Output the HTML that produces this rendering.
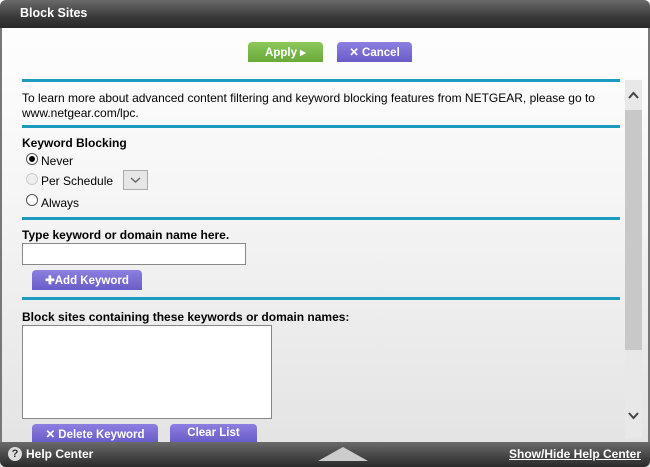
<!DOCTYPE html>
<html><head><style>
*{margin:0;padding:0;box-sizing:border-box}
body{width:650px;height:467px;overflow:hidden;font-family:"Liberation Sans",Arial,sans-serif;font-size:12px;color:#000;position:relative;background:linear-gradient(#fff 0%,#f6f6f6 40%,#e2e2e2 100%)}
.a{position:absolute}
.hdr{left:0;top:0;width:650px;height:28px;background:linear-gradient(#6a6a6a,#3a3a3a 60%,#2a2a2a);border-radius:6px 6px 0 0;color:#fff;font-weight:bold;font-size:12.5px;padding:6px 0 0 20px}
.lb{left:0;top:28px;width:2px;height:414px;background:#777}
.rb{left:648px;top:28px;width:2px;height:414px;background:#777}
.btn{border-radius:4px 4px 0 0;color:#fff;font-weight:bold;text-align:center;font-size:11.5px}
.g{background:linear-gradient(#8cc85a,#6aa83a)}
.p{background:linear-gradient(#8c7fe0,#6a5cc8)}
.line{left:22px;width:598px;height:3px;background:#1a9bbf}
.sb{left:625px;top:80px;width:17px;height:358px;background:#e8e8e8}
.th{left:625px;top:110px;width:17px;height:240px;background:#c8c8c8}
.r{width:12px;height:12px;border-radius:50%;border:1px solid #555;background:#fff}
.ft{left:0;top:442px;width:650px;height:25px;background:linear-gradient(#6a6a6a,#2a2a2a);color:#fff;font-weight:bold;font-size:12px;border-radius:0 0 6px 6px}
</style></head><body>
<div class="a hdr">Block Sites</div>
<div class="a lb"></div><div class="a rb"></div>
<div class="a btn g" style="left:248px;top:42px;width:75px;height:20px;padding-top:3px">Apply ▸</div>
<div class="a btn p" style="left:337px;top:42px;width:75px;height:20px;padding-top:3px">✕ Cancel</div>
<div class="a line" style="top:79px"></div>
<div class="a sb"></div><div class="a th"></div>
<svg class="a" style="left:627px;top:90px" width="13" height="10"><path d="M2 8 L6.5 3 L11 8" stroke="#444" stroke-width="2" fill="none"/></svg>
<svg class="a" style="left:627px;top:411px" width="13" height="10"><path d="M2 2 L6.5 7 L11 2" stroke="#444" stroke-width="2" fill="none"/></svg>
<div class="a" style="left:22px;top:91px;line-height:15px">To learn more about advanced content filtering and keyword blocking features from NETGEAR, please go to<br>www.netgear.com/lpc.</div>
<div class="a line" style="top:125px"></div>
<div class="a" style="left:22px;top:136px;font-weight:bold">Keyword Blocking</div>
<div class="a r" style="left:26px;top:153px"><div style="width:6px;height:6px;border-radius:50%;background:#000;margin:2px"></div></div>
<div class="a" style="left:41px;top:154px">Never</div>
<div class="a r" style="left:26px;top:173px;border-color:#ccc;background:#eee"></div>
<div class="a" style="left:41px;top:174px">Per Schedule</div>
<div class="a" style="left:123px;top:170px;width:25px;height:20px;border:1px solid #aaa;background:#e6e6e6"><svg width="23" height="18"><path d="M7 7 L11.5 11 L16 7" stroke="#666" stroke-width="1.5" fill="none"/></svg></div>
<div class="a r" style="left:26px;top:194px"></div>
<div class="a" style="left:41px;top:196px">Always</div>
<div class="a line" style="top:217px"></div>
<div class="a" style="left:22px;top:228px;font-weight:bold">Type keyword or domain name here.</div>
<div class="a" style="left:22px;top:243px;width:224px;height:22px;border:1px solid #888;background:#fff"></div>
<div class="a btn p" style="left:32px;top:270px;width:110px;height:20px;padding-top:3px">✚Add Keyword</div>
<div class="a line" style="top:297px"></div>
<div class="a" style="left:22px;top:310px;font-weight:bold">Block sites containing these keywords or domain names:</div>
<div class="a" style="left:22px;top:325px;width:250px;height:94px;border:1px solid #888;background:#fff"></div>
<div class="a btn p" style="left:32px;top:424px;width:126px;height:18px;padding-top:3px">✕ Delete Keyword</div>
<div class="a btn p" style="left:170px;top:424px;width:87px;height:18px;padding-top:3px">Clear List</div>
<div class="a ft">
<div class="a" style="left:8px;top:5px;width:14px;height:14px;border-radius:50%;background:#ddd;color:#333;font-size:11px;text-align:center;line-height:14px">?</div>
<div class="a" style="left:26px;top:5px">Help Center</div>
<div class="a" style="left:318px;top:5px;width:0;height:0;border-left:25px solid transparent;border-right:25px solid transparent;border-bottom:14px solid #ccc"></div>
<div class="a" style="left:509px;top:5px;text-decoration:underline">Show/Hide Help Center</div>
</div>
</body></html>
